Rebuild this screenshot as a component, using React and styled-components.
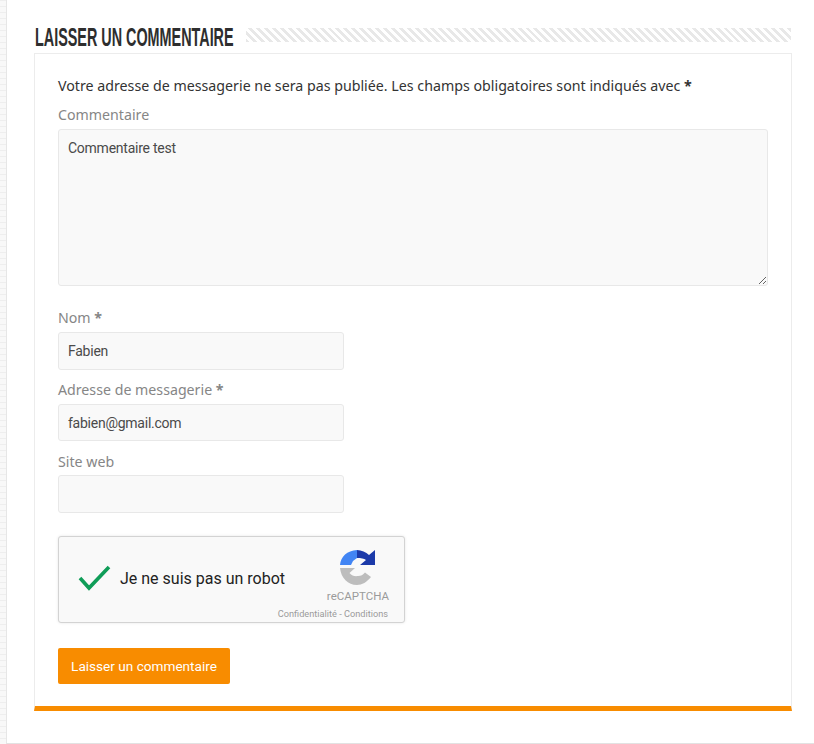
import React from "react";
import styled, { createGlobalStyle } from "styled-components";

const Global = createGlobalStyle`
  html, body { margin: 0; padding: 0; background: #fff; }
  body { font-family: "Noto Sans", "Open Sans", sans-serif; overflow: hidden; }
  * { box-sizing: border-box; }
`;

const Page = styled.div`
  width: 814px;
  height: 744px;
  background-color: #f3f3f3;
  background-image: repeating-linear-gradient(0deg, #f8f8f8 0 5px, #eeeeee 5px 6px);
  padding-left: 6px;
  overflow: hidden;
`;

const Main = styled.main`
  width: 808px;
  height: 744px;
  background: #fff;
  border-left: 1px solid #e6e6e6;
  border-bottom: 1px solid #e2e2e2;
  padding: 25px 0 0 27px;
`;

const Section = styled.section`
  width: 758px;
`;

const HeadingRow = styled.div`
  display: flex;
  align-items: center;
  gap: 11px;
  height: 24px;
  margin-bottom: 4px;
`;

const Heading = styled.h2`
  margin: 0 0 0 1px;
  flex: none;
  width: 200px;
  font-family: "Liberation Sans", sans-serif;
  font-size: 25px;
  line-height: 24px;
  font-weight: 700;
  color: #2e2e2e;
  white-space: nowrap;
  transform: scaleX(0.575);
  transform-origin: left center;
`;

const Stripes = styled.div`
  flex: 1;
  height: 14px;
  margin: -4px 1px 0 0;
  background-image: repeating-linear-gradient(45deg, #e8e8e8 0 2.8px, #ffffff 2.8px 5.6px);
`;

const Card = styled.div`
  height: 658px;
  background: #fff;
  border: 1px solid #ececec;
  border-bottom: 5px solid #f88c00;
  padding: 21px 23px 0 23px;
`;

const Notice = styled.p`
  margin: 0;
  font-size: 14.22px;
  line-height: 22px;
  color: #333;
  white-space: nowrap;
`;

const Label = styled.label`
  display: block;
  font-size: 14.2px;
  line-height: 22px;
  color: #868686;
  margin-top: ${(p) => p.$top ?? 0}px;
`;

const Strong = styled.b`
  font-weight: 700;
`;

const TextArea = styled.textarea`
  display: block;
  width: 710px;
  height: 157px;
  margin: 3px 0 0;
  padding: 8px 9px;
  background: #f9f9f9;
  border: 1px solid #e8e8e8;
  border-radius: 3px;
  font-family: "Roboto", "Liberation Sans", sans-serif;
  font-size: 14px;
  letter-spacing: -0.25px;
  line-height: 20px;
  color: #4a4a4a;
  outline: none;
`;

const Input = styled.input`
  display: block;
  width: 286px;
  height: ${(p) => p.$h ?? 38}px;
  margin: ${(p) => p.$gap ?? 3}px 0 0;
  padding: 0 9px;
  background: #f9f9f9;
  border: 1px solid #e8e8e8;
  border-radius: 3px;
  font-family: "Roboto", "Liberation Sans", sans-serif;
  font-size: 14px;
  letter-spacing: -0.25px;
  color: #4a4a4a;
  outline: none;
`;

const Captcha = styled.div`
  display: flex;
  align-items: center;
  width: 347px;
  height: 87px;
  margin-top: 23px;
  background: #f9f9f9;
  border: 1px solid #d3d3d3;
  border-radius: 3px;
  box-shadow: 0 0 3px rgba(0, 0, 0, 0.1);
  padding: 0 14px 0 18px;
  font-family: "Roboto", "Liberation Sans", sans-serif;
`;

const Check = styled.svg`
  width: 36px;
  height: 28px;
  flex: none;
  margin-top: -3px;
`;

const CaptchaText = styled.span`
  margin-left: 7px;
  margin-top: -2px;
  font-size: 16px;
  color: #222;
  white-space: nowrap;
`;

const Brand = styled.div`
  margin-left: auto;
  flex: none;
  width: 100px;
  height: 100%;
  display: flex;
  flex-direction: column;
  align-items: flex-end;
  padding-top: 13px;
`;

const Logo = styled.svg`
  width: 35px;
  height: 35px;
  margin-right: 15px;
  flex: none;
`;

const BrandName = styled.span`
  font-size: 11.5px;
  line-height: 13px;
  margin: 5px 1px 0 0;
  color: #9b9b9b;
`;

const Links = styled.span`
  font-size: 9.2px;
  line-height: 11px;
  margin: 5px 2px 0 0;
  color: #9b9b9b;
  white-space: nowrap;
`;

const Submit = styled.button`
  display: block;
  width: 172px;
  height: 36px;
  margin-top: 25px;
  padding: 0;
  background: #f88c00;
  border: 0;
  border-radius: 2px;
  color: #fff;
  font-family: "Roboto", "Liberation Sans", sans-serif;
  font-size: 13.6px;
`;

export default function App() {
  return (
    <Page>
      <Global />
      <Main>
        <Section>
          <HeadingRow>
            <Heading>LAISSER UN COMMENTAIRE</Heading>
            <Stripes />
          </HeadingRow>
          <Card>
            <Notice>
              Votre adresse de messagerie ne sera pas publiée. Les champs obligatoires sont indiqués avec <Strong>*</Strong>
            </Notice>
            <Label $top={7}>Commentaire</Label>
            <TextArea defaultValue="Commentaire test" />
            <Label $top={21}>Nom <Strong>*</Strong></Label>
            <Input defaultValue="Fabien" />
            <Label $top={9}>Adresse de messagerie <Strong>*</Strong></Label>
            <Input $h={37} defaultValue="fabien@gmail.com" />
            <Label $top={10}>Site web</Label>
            <Input $gap={2} defaultValue="" />
            <Captcha>
              <Check viewBox="0 0 36 28">
                <path d="M3 14 L12 24 L32 3" fill="none" stroke="#0f9d58" strokeWidth="3.6" />
              </Check>
              <CaptchaText>Je ne suis pas un robot</CaptchaText>
              <Brand>
                <Logo viewBox="0 0 35 35">
                  <path d="M0 15 C0.8 6.5 7 0.6 17 0 L17 8 L13 11 L11 15 Z" fill="#4285f4" />
                  <path d="M17 0 C21.5 0.4 26 2 29 5 L35 0 L35 15 L20 15 L26 10 C24 8.5 21 8 17 8 Z" fill="#1c3aa9" />
                  <path d="M0 18 L15 18 L9.5 23 C12 26 15 26.5 18 26 C21 26 23 25 25 22.5 L31 27 C27 32 22 35 17 35 C8 35 1 28 0 18 Z" fill="#bdbdbd" />
                </Logo>
                <BrandName>reCAPTCHA</BrandName>
                <Links>Confidentialité - Conditions</Links>
              </Brand>
            </Captcha>
            <Submit>Laisser un commentaire</Submit>
          </Card>
        </Section>
      </Main>
    </Page>
  );
}
